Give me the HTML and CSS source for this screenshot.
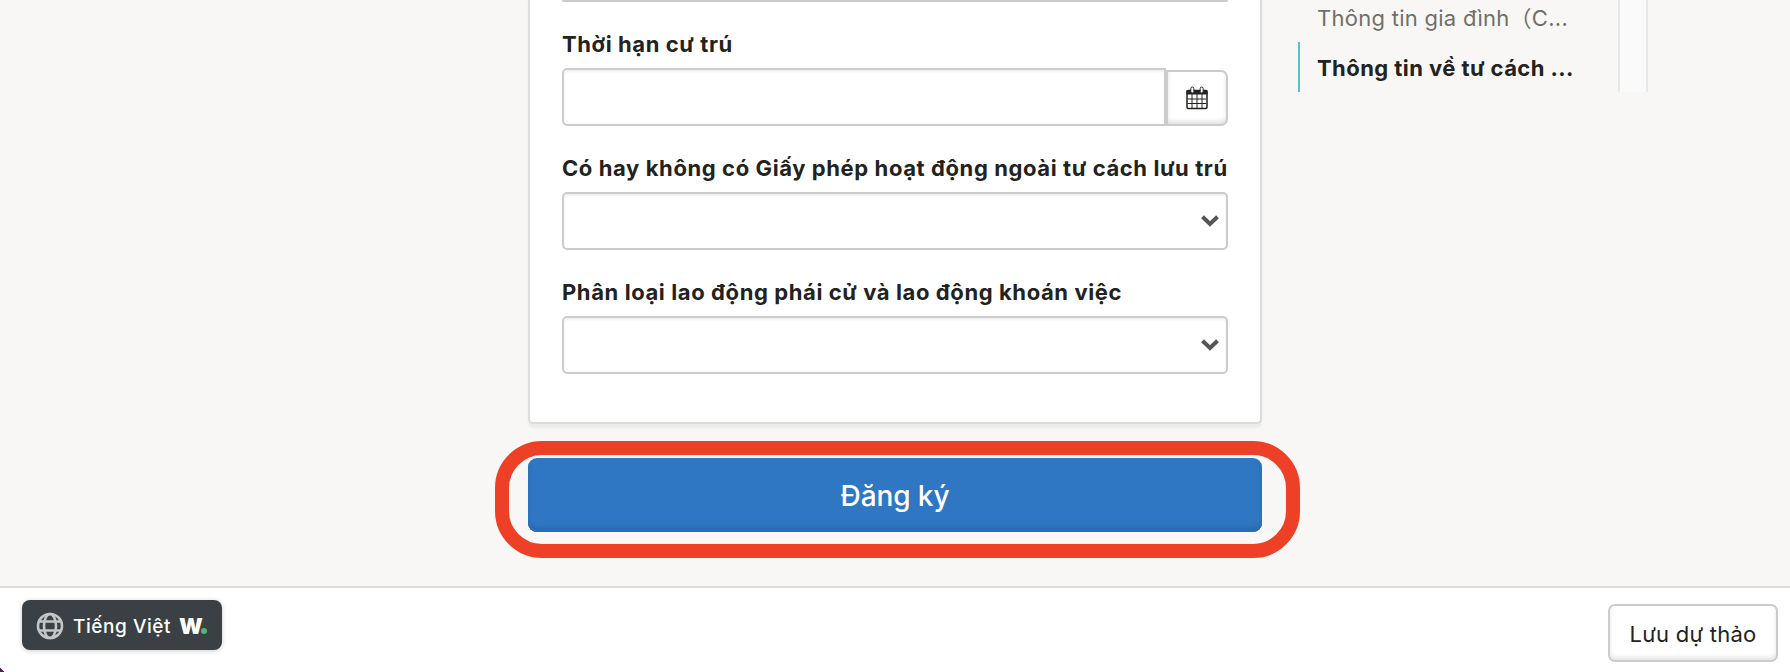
FILE: index.html
```
<!DOCTYPE html>
<html lang="vi">
<head>
<meta charset="utf-8">
<title>Đăng ký</title>
<link rel="stylesheet" href="styles.css">
</head>
<body>
<div class="page">
  <main class="content">
    <div class="form-column">
      <section class="card">
        <div class="control control-cut"></div>
        <label class="label">Thời hạn cư trú</label>
        <div class="date-row">
          <div class="control date-input"></div>
          <button class="date-button" aria-label="Lịch">
            <svg width="22" height="24" viewBox="0 0 22 24">
              <rect x="1" y="4.5" width="20" height="18" rx="1.2" fill="#fff" stroke="#222220" stroke-width="1.5"/>
              <path d="M.5 8.500V5Q.5 4 1.500 4H20.500Q21.500 4 21.500 5V8.500Z" fill="#222220"/>
              <path d="M6 8V22.500M11 8V22.500M16 8V22.500M1.500 13H20.500M1.500 17.500H20.500" stroke="#222220" stroke-width="1"/>
              <rect x="4.800" y="1" width="3" height="6" rx="1.500" fill="#fff" stroke="#222220"/>
              <rect x="14.200" y="1" width="3" height="6" rx="1.500" fill="#fff" stroke="#222220"/>
            </svg>
          </button>
        </div>
        <label class="label">Có hay không có Giấy phép hoạt động ngoài tư cách lưu trú</label>
        <div class="control select">
          <svg class="chevron" width="18" height="12" viewBox="0 0 18 12"><path d="M1.500 1.700L9 9L16.500 1.700" fill="none" stroke="#555" stroke-width="4"/></svg>
        </div>
        <label class="label">Phân loại lao động phái cử và lao động khoán việc</label>
        <div class="control select">
          <svg class="chevron" width="18" height="12" viewBox="0 0 18 12"><path d="M1.500 1.700L9 9L16.500 1.700" fill="none" stroke="#555" stroke-width="4"/></svg>
        </div>
      </section>
      <div class="submit-wrap">
        <button class="submit">Đăng ký</button>
        <div class="highlight"></div>
      </div>
    </div>
    <nav class="toc">
      <a class="toc-item">Thông tin gia đình（C...</a>
      <a class="toc-item current">Thông tin về tư cách ...</a>
    </nav>
    <div class="scroll-track"></div>
  </main>
  <footer class="footer">
    <div class="lang">
      <svg class="globe" width="28" height="28" viewBox="0 0 28 28" fill="none" stroke="#c4c5c6" stroke-width="2.600">
        <circle cx="14" cy="14" r="12"/><ellipse cx="14" cy="14" rx="6" ry="12"/><path d="M3 9.500H25M3 18.500H25"/>
      </svg>
      <span class="lang-name">Tiếng Việt</span>
      <span class="brand">W</span><i class="brand-dot"></i>
    </div>
    <button class="save">Lưu dự thảo</button>
    <i class="corner"></i>
  </footer>
</div>
</body>
</html>
```
FILE: styles.css
```
* { box-sizing: border-box; }
body { margin: 0; background: #f8f7f6; color: #222220; font-family: Inter, "Noto Sans CJK JP", sans-serif; font-size: 22px; }
button { font: inherit; color: inherit; padding: 0; }
svg { display: block; }
.page { position: relative; display: flex; flex-direction: column; height: 672px; overflow: hidden; }
.content { display: flex; flex: 1; align-items: flex-start; padding-left: 528px; }
.form-column { width: 734px; }
.card { height: 424px; padding: 0 32px; background: #fff; border: 2px solid #dcdcdb; border-top: 0; border-radius: 0 0 5px 5px; box-shadow: 0 4px 2px #ececea; }
.control { height: 58px; background: #fff; border: 2px solid #ccc; border-radius: 5px; box-shadow: inset 0 2px 2px #f0f0f0; }
.control-cut { height: 2px; border-width: 0 0 2px; }
.label { display: block; height: 66px; padding-top: 27px; font-weight: 700; line-height: 30px; letter-spacing: .6px; white-space: nowrap; }
.date-row { display: flex; align-items: flex-end; height: 58px; }
.date-input { flex: 1; border-radius: 5px 0 0 5px; }
.date-button { display: flex; align-items: center; justify-content: center; width: 62px; height: 56px; background: #fff; border: 2px solid #ccc; border-radius: 0 7px 7px 0; box-shadow: inset 0 -3px 4px #e2e2e2; }
.select { display: flex; align-items: center; justify-content: flex-end; padding-right: 7px; }
.submit-wrap { position: relative; margin-top: 34px; }
.submit { display: block; width: 734px; height: 74px; padding-top: 2px; border: 0; border-radius: 9px; background: #2f77c2; color: #fff; font-size: 28px; font-weight: 450; letter-spacing: -.1px; box-shadow: inset 0 -2px 0 #2b6db5, inset 0 -5px 4px #2a6bb1; }
.highlight { position: absolute; left: -33px; top: -17px; width: 805px; height: 117px; border: 14px solid #ee4027; border-radius: 47px; }
.toc { width: 320px; margin-left: 36px; height: 92px; display: flex; flex-direction: column; justify-content: flex-end; }
.toc-item { flex: none; height: 50px; padding-left: 17px; border-left: 2px solid transparent; line-height: 52px; color: #706f68; letter-spacing: .27px; white-space: nowrap; }
.current { border-color: #5bc0cd; color: #222220; font-weight: 700; letter-spacing: .44px; }
.scroll-track { width: 30px; height: 92px; background: #fafafa; border: solid #e8e8e7; border-width: 0 2px; }
.footer { display: flex; align-items: flex-start; justify-content: space-between; height: 86px; padding: 12px 12px 0 22px; background: #fff; border-top: 2px solid #dcdcdb; }
.lang { display: flex; align-items: center; width: 200px; height: 50px; padding: 2px 0 0 14px; border-radius: 8px; background: #3b4044; color: #fff; font-size: 19px; font-weight: 500; box-shadow: 0 1px 5px #0003; }
.lang-name { width: 106px; margin-left: 9px; letter-spacing: .55px; white-space: nowrap; }
.brand { width: 22px; font-size: 22px; font-weight: 900; }
.brand-dot { width: 6px; height: 6px; margin: 10px 0 0 0; border-radius: 50%; background: #56b278; }
.save { width: 170px; height: 58px; padding-top: 2px; margin-top: 4px; border: 2px solid #ccc; border-radius: 7px; background: #fff; letter-spacing: .25px; box-shadow: inset 0 -3px 4px #e6e6e6; }
.corner { position: absolute; left: 0; bottom: 0; width: 5px; height: 5px; background: linear-gradient(45deg, #54204e 50%, transparent 50%); }
```
